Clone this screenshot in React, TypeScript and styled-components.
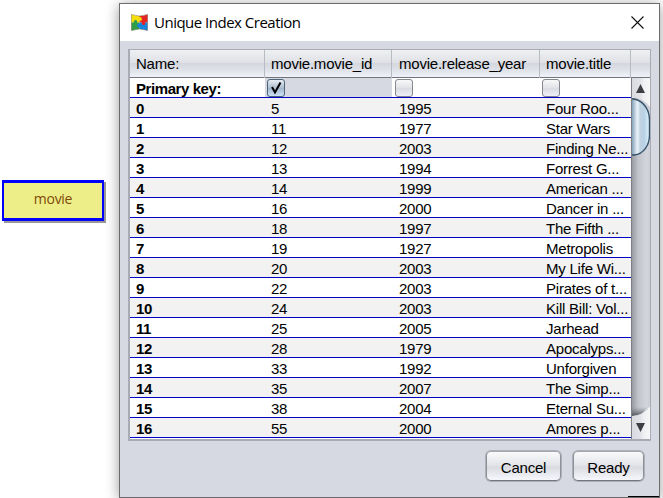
import React from "react";
import styled, { createGlobalStyle } from "styled-components";

const GlobalStyle = createGlobalStyle`
  * { box-sizing: border-box; }
  body { margin: 0; background: #fff; overflow: hidden; }
`;

const Desktop = styled.main`
  position: relative;
  width: 663px;
  height: 498px;
  overflow: hidden;
  background: #fff;
  font: 15px/19px "Liberation Sans", Arial, sans-serif;
  letter-spacing: -0.22px;
  color: #000;
`;

const EntityNode = styled.div`
  position: absolute;
  left: 2px;
  top: 180px;
  width: 102px;
  height: 41px;
  border: solid #0000ff;
  border-width: 3px 2px;
  background: #eeee88;
  box-shadow: 2px 2px 0 #999;
  color: #7d4a08;
  font: 14px/31px "Open Sans", sans-serif;
  letter-spacing: -0.3px;
  text-align: center;
`;

const Dialog = styled.section`
  position: absolute;
  left: 119px;
  top: 3px;
  width: 541px;
  height: 495px;
  display: flex;
  flex-direction: column;
  border: 1px solid #6c6c6e;
  background: #d6d9e1;
  box-shadow: 0 2px 13px rgba(0, 0, 0, 0.4);
`;

const TitleBar = styled.header`
  display: flex;
  align-items: center;
  height: 37px;
  padding: 0 15px 0 11px;
  background: #fff;
`;

const Title = styled.h1`
  flex: 1;
  margin: -1px 0 0 6px;
  font: 400 15px/20px "Open Sans", sans-serif;
  letter-spacing: -0.5px;
  white-space: nowrap;
`;

const CloseButton = styled.button`
  display: flex;
  margin-top: -1px;
  padding: 0;
  border: 0;
  background: none;
`;

const TableFrame = styled.div`
  display: flex;
  flex-direction: column;
  width: 523px;
  height: 392px;
  margin: 8px 0 0 8px;
  border: solid #a8abb4;
  border-width: 1px 1px 2px 2px;
  background: #fff;
`;

const HeaderRow = styled.div`
  display: grid;
  flex: none;
  grid-template-columns: 135px 127px 148px 91px 1fr;
  height: 28px;
  border-bottom: 1px solid #72757c;
  background: linear-gradient(#eff0f3 0, #dfe1e6 47%, #d4d7de 50%, #dfe2e9 75%, #eff2f9 100%);
`;

const HeaderCell = styled.div`
  padding-left: 6px;
  border-right: 1px solid #b8bbc2;
  line-height: 28px;
  white-space: nowrap;
  &:nth-child(3) { padding-left: 7px; }
  &:last-child { border: 0; }
`;

const TableBody = styled.div`
  display: flex;
  flex: 1;
`;

const Rows = styled.div`
  width: 501px;
`;

const Row = styled.div<{ $shaded?: boolean }>`
  display: grid;
  grid-template-columns: 135px 127px 148px 91px;
  height: 20px;
  border-bottom: 1px solid #0000c8;
  background: ${({ $shaded }) => ($shaded ? "#f2f2f2" : "#fff")};
`;

const Cell = styled.div<{ $bold?: boolean }>`
  padding-left: 6px;
  line-height: 21px;
  height: 19px;
  white-space: nowrap;
  font-weight: ${({ $bold }) => ($bold ? 700 : 400)};
  letter-spacing: ${({ $bold }) => ($bold ? "-0.42px" : "-0.22px")};
  &:nth-child(3) { padding-left: 7px; }
`;

const CheckCell = styled.div<{ $selected?: boolean }>`
  height: 19px;
  padding: 1px 0 0 2px;
  background: ${({ $selected }) => ($selected ? "#d6d9e1" : "transparent")};
  &:nth-child(3) { padding-left: 3px; }
`;

const CheckBox = styled.span<{ $checked?: boolean }>`
  display: block;
  width: 18px;
  height: 18px;
  border: 1px solid ${({ $checked }) => ($checked ? "#506579" : "#85878e")};
  border-radius: 3px;
  background: ${({ $checked }) =>
    $checked
      ? "linear-gradient(#e7eef5, #afc0d1 48%, #a3b8cc 52%, #cde2f6)"
      : "linear-gradient(#f8f8f9, #e1e3e7 48%, #dadce2 52%, #edf0f6)"};
  svg { display: block; }
`;

const Scrollbar = styled.div`
  width: 19px;
  border-left: 1px solid #7b7e85;
  svg { display: block; }
`;

const Actions = styled.footer`
  display: flex;
  justify-content: flex-end;
  gap: 12px;
  padding: 10px 15px 0 0;
`;

const ActionButton = styled.button<{ $width: number }>`
  width: ${({ $width }) => $width}px;
  height: 30px;
  padding: 2px 0 0;
  border: 1px solid;
  border-color: #a3a6ae #8d9097 #73767d;
  border-radius: 5px;
  background: linear-gradient(#fafafb, #e3e5e9 46%, #d9dbe1 54%, #f3f5fa 96%);
  box-shadow: 0 0 0 1px #adb0b8;
  font: 15px "Liberation Sans", Arial, sans-serif;
  letter-spacing: -0.22px;
  color: #000;
`;

const ScreenEdge = styled.div`
  position: absolute;
  left: 628px;
  top: 496px;
  width: 31px;
  height: 1px;
  background: #000;
`;

const movies: [number, number, string][] = [
  [5, 1995, "Four Roo..."],
  [11, 1977, "Star Wars"],
  [12, 2003, "Finding Ne..."],
  [13, 1994, "Forrest G..."],
  [14, 1999, "American ..."],
  [16, 2000, "Dancer in ..."],
  [18, 1997, "The Fifth ..."],
  [19, 1927, "Metropolis"],
  [20, 2003, "My Life Wi..."],
  [22, 2003, "Pirates of t..."],
  [24, 2003, "Kill Bill: Vol..."],
  [25, 2005, "Jarhead"],
  [28, 1979, "Apocalyps..."],
  [33, 1992, "Unforgiven"],
  [35, 2007, "The Simp..."],
  [38, 2004, "Eternal Su..."],
  [55, 2000, "Amores p..."],
];

const PuzzleIcon = () => (
  <svg width="17" height="17" viewBox="0 0 17 17">
    <path d="M.5.5Q4.500 2 8.500 2V8.500H.5Z" fill="#f8de08" />
    <path d="M8.500 2Q12.500 2 16.500.5V8.500H8.500Z" fill="#e52421" />
    <path d="M.5 8.500H8.500V15Q4.500 15 .5 16.500Z" fill="#2f9e45" />
    <path d="M8.500 8.500H16.500V16.500Q12.500 15 8.500 15Z" fill="#1683dc" />
    <circle cx="9" cy="5" r="1.900" fill="#f8de08" />
    <circle cx="4.500" cy="8" r="1.900" fill="#2f9e45" />
    <circle cx="8" cy="11.500" r="1.900" fill="#1683dc" />
    <circle cx="12.500" cy="9" r="1.900" fill="#e52421" />
    <path d="M.5.5V16.500Q8.500 13.500 16.500 16.500V.5Q8.500 3.500 .5.5Z" fill="none" stroke="#4a3a20" strokeOpacity=".45" strokeWidth=".8" />
  </svg>
);

const ScrollArt = () => (
  <svg width="18" height="361" viewBox="0 0 18 361">
    <defs>
      <linearGradient id="track">
        <stop stopColor="#989ba2" />
        <stop offset=".35" stopColor="#c1c4cb" />
        <stop offset=".8" stopColor="#d2d5dc" />
        <stop offset="1" stopColor="#cbced5" />
      </linearGradient>
      <linearGradient id="arrowFace">
        <stop stopColor="#d8dae0" />
        <stop offset=".5" stopColor="#e2e4e9" />
        <stop offset=".65" stopColor="#eff0f3" />
        <stop offset="1" stopColor="#f7f7f8" />
      </linearGradient>
      <linearGradient id="thumb">
        <stop stopColor="#83a2b9" />
        <stop offset=".3" stopColor="#eaf2f9" />
        <stop offset=".48" stopColor="#c0d2e1" />
        <stop offset=".7" stopColor="#b9d1e4" />
        <stop offset="1" stopColor="#e0f3ff" />
      </linearGradient>
      <linearGradient id="trackEnd" x1="0" y1="0" x2="0" y2="1">
        <stop stopColor="#777a80" stopOpacity="0" />
        <stop offset="1" stopColor="#50535a" />
      </linearGradient>
    </defs>
    <path d="M0 0H18V361H0Z" fill="url(#track)" />
    <path d="M0 329H15Q11 338 0 338Z" fill="url(#trackEnd)" />
    <path d="M0 0H18V29Q12 20 0 20Z" fill="url(#arrowFace)" />
    <path d="M0 338Q13 337 18 328V361H0Z" fill="url(#arrowFace)" />
    <path d="M0 21H2C12 23 17.500 32 17.500 42V57C17.500 67 12 76 2 77H0Z" fill="url(#thumb)" />
    <path d="M0 21H2C12 23 17.500 32 17.500 42V57C17.500 67 12 76 2 77H0" fill="none" stroke="#355269" strokeWidth="1.400" />
    <path d="M8.500 6L13 15H4Z M4 345H13L8.500 354Z" fill="#3d3f43" />
  </svg>
);

export default function App() {
  return (
    <>
      <GlobalStyle />
      <Desktop>
        <EntityNode>movie</EntityNode>
        <Dialog>
          <TitleBar>
            <PuzzleIcon />
            <Title>Unique Index Creation</Title>
            <CloseButton aria-label="Close">
              <svg width="13" height="13" viewBox="0 0 13 13">
                <path d="M.5.5L12.500 12.500M12.500.5L.5 12.500" stroke="#111" strokeWidth="1.100" />
              </svg>
            </CloseButton>
          </TitleBar>
          <TableFrame>
            <HeaderRow>
              <HeaderCell>Name:</HeaderCell>
              <HeaderCell>movie.movie_id</HeaderCell>
              <HeaderCell>movie.release_year</HeaderCell>
              <HeaderCell>movie.title</HeaderCell>
              <HeaderCell />
            </HeaderRow>
            <TableBody>
              <Rows>
                <Row>
                  <Cell $bold>Primary key:</Cell>
                  <CheckCell $selected>
                    <CheckBox $checked>
                      <svg width="16" height="16" viewBox="0 0 16 16">
                        <path d="M4 7L7 12.500L12.500 2.500" fill="none" stroke="#000" strokeWidth="2" />
                      </svg>
                    </CheckBox>
                  </CheckCell>
                  <CheckCell><CheckBox /></CheckCell>
                  <CheckCell><CheckBox /></CheckCell>
                </Row>
                {movies.map(([id, year, title], index) => (
                  <Row key={id} $shaded={index % 2 === 0}>
                    <Cell $bold>{index}</Cell>
                    <Cell>{id}</Cell>
                    <Cell>{year}</Cell>
                    <Cell>{title}</Cell>
                  </Row>
                ))}
              </Rows>
              <Scrollbar><ScrollArt /></Scrollbar>
            </TableBody>
          </TableFrame>
          <Actions>
            <ActionButton $width={75}>Cancel</ActionButton>
            <ActionButton $width={71}>Ready</ActionButton>
          </Actions>
        </Dialog>
        <ScreenEdge />
      </Desktop>
    </>
  );
}
